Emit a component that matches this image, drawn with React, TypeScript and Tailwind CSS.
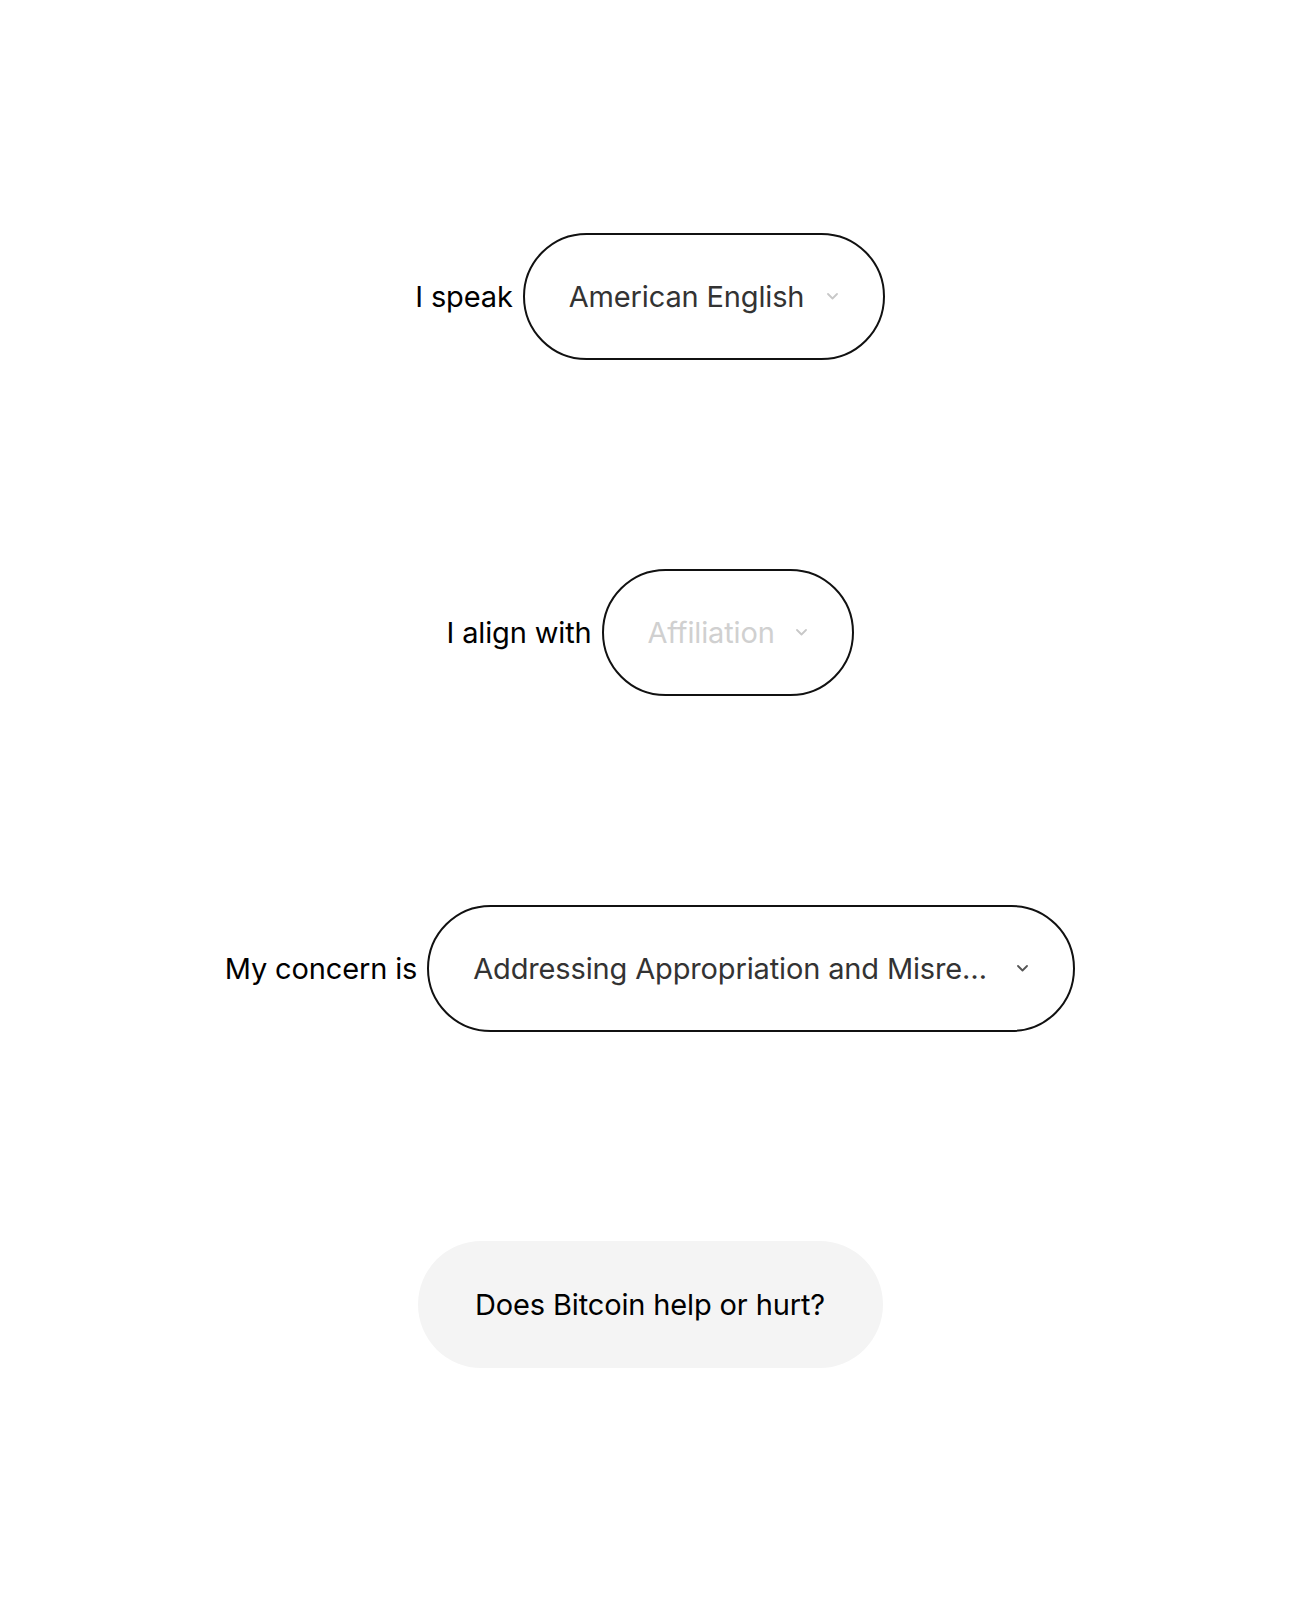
import React from "react";

function Chevron({ color }: { color: string }) {
  return (
    <svg width="11" height="7" viewBox="0 0 11 7" fill="none" className="shrink-0">
      <path d="M1 1L5.5 5.5L10 1" stroke={color} strokeWidth="1.8" strokeLinecap="round" strokeLinejoin="round" />
    </svg>
  );
}

function Row({
  label,
  value,
  valueClass,
  chevron,
  pillClass,
}: {
  label: string;
  value: string;
  valueClass: string;
  chevron: string;
  pillClass: string;
}) {
  return (
    <div className="flex items-center justify-center gap-[10px]">
      <span className="text-[29px] text-black leading-none tracking-[-0.005em]">{label}</span>
      <div
        className={`flex h-[127px] items-center rounded-full border-2 border-[#111] pl-[44px] pr-[45px] ${pillClass}`}
      >
        <span className={`text-[29px] leading-none whitespace-nowrap tracking-[-0.005em] ${valueClass}`}>{value}</span>
        <span className="ml-auto pl-[20px]">
          <Chevron color={chevron} />
        </span>
      </div>
    </div>
  );
}

export default function App() {
  return (
    <div
      className="min-h-[1600px] w-full bg-white flex flex-col items-center pt-[233px] gap-[209px]"
      style={{ fontFamily: "Inter, 'Liberation Sans', sans-serif" }}
    >
      <Row
        label="I speak"
        value="American English"
        valueClass="text-[#333]"
        chevron="#c8c8c8"
        pillClass="w-[362px]"
      />
      <Row
        label="I align with"
        value="Affiliation"
        valueClass="text-[#d0d0d0]"
        chevron="#c8c8c8"
        pillClass="w-[252px]"
      />
      <Row
        label="My concern is"
        value="Addressing Appropriation and Misre…"
        valueClass="text-[#333]"
        chevron="#555"
        pillClass="w-[648px]"
      />
      <button className="flex h-[127px] w-[465px] items-center justify-center rounded-full bg-[#f4f4f4] text-[29px] tracking-[-0.005em] text-black">
        Does Bitcoin help or hurt?
      </button>
    </div>
  );
}
